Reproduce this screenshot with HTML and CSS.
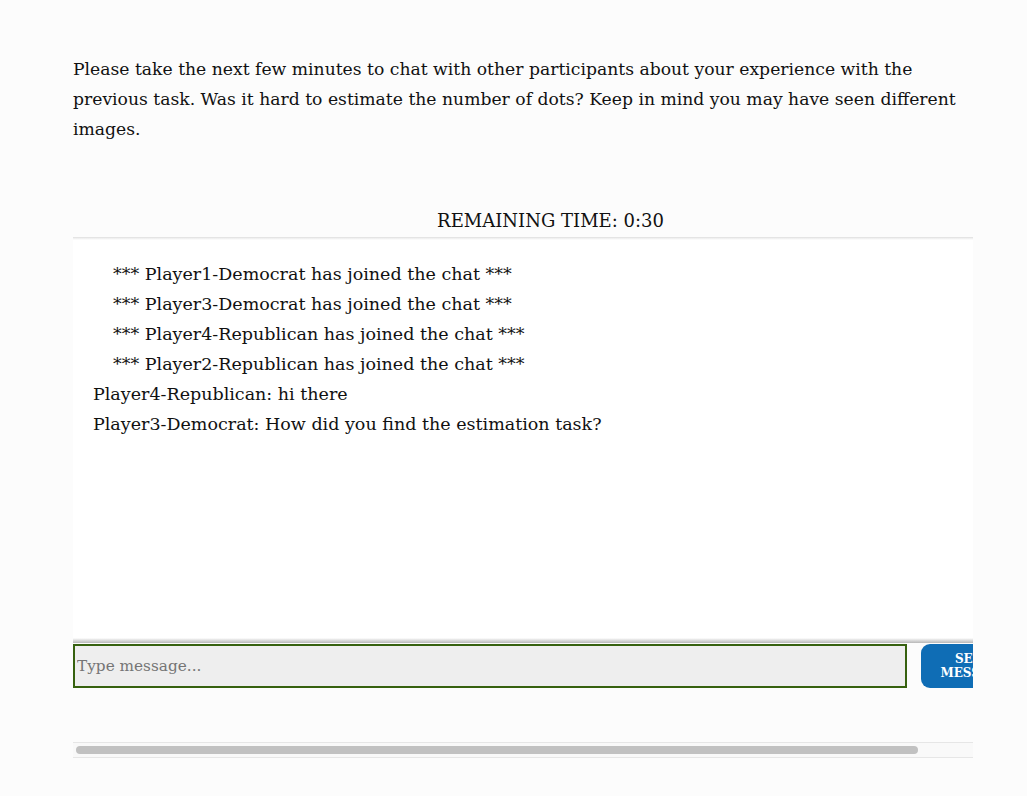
FILE: index.html
```html
<!DOCTYPE html>
<html lang="en">
<head>
<meta charset="utf-8">
<title>Chat</title>
<link rel="stylesheet" href="styles.css">
</head>
<body>
<div class="page">
  <p class="intro">Please take the next few minutes to chat with other participants about your experience with the previous task. Was it hard to estimate the number of dots? Keep in mind you may have seen different images.</p>
  <div class="chat-frame">
    <div class="chat-scroll">
      <div class="chat-inner">
        <div class="timer">REMAINING TIME: 0:30</div>
        <div class="log">
          <div class="msg sys">*** Player1-Democrat has joined the chat ***</div>
          <div class="msg sys">*** Player3-Democrat has joined the chat ***</div>
          <div class="msg sys">*** Player4-Republican has joined the chat ***</div>
          <div class="msg sys">*** Player2-Republican has joined the chat ***</div>
          <div class="msg">Player4-Republican: hi there</div>
          <div class="msg">Player3-Democrat: How did you find the estimation task?</div>
        </div>
        <div class="composer">
          <input class="input" type="text" placeholder="Type message...">
          <button class="send" type="button">Send<br>Message</button>
        </div>
      </div>
    </div>
    <div class="hscroll"><div class="hthumb"></div></div>
  </div>
</div>
</body>
</html>
```
FILE: styles.css
```css
html, body {
  margin: 0;
  padding: 0;
  background: #fcfcfc;
}
body {
  font-family: "DejaVu Serif", "Liberation Serif", serif;
  font-size: 17.5px;
  color: #111;
}
.page {
  width: 900px;
  padding: 54px 0 0 73px;
}
.intro {
  margin: 0;
  line-height: 30px;
  font-size: 17.2px;
}
.chat-frame {
  margin-top: 62px;
  width: 900px;
}
.chat-scroll {
  width: 900px;
  overflow: hidden;
}
.chat-inner {
  width: 955px;
}
.timer {
  text-align: center;
  line-height: 30px;
  height: 31px;
  font-size: 18px;
}
.log {
  height: 384px;
  padding-top: 22px;
  background:
    linear-gradient(to bottom, #dcdcdc 0, #ececec 1px, #ffffff 3px, #ffffff calc(100% - 5px), #e0e0e0 calc(100% - 3px), #b8b8b8 100%);
}
.msg {
  line-height: 30px;
  padding-left: 20px;
}
.msg.sys {
  padding-left: 40px;
}
.composer {
  display: flex;
  gap: 14px;
  margin-top: 1px;
  padding-bottom: 54px;
}
.input {
  box-sizing: border-box;
  width: 834px;
  height: 44px;
  border: 2px solid #36610f;
  background: #eeeeee;
  font-family: inherit;
  font-size: 15.3px;
  padding: 0 2px;
  color: #111;
  outline: none;
}
.input::placeholder {
  color: #757575;
}
.send {
  box-sizing: border-box;
  flex: none;
  width: 107px;
  height: 44px;
  border: none;
  border-radius: 9px;
  background: #0f6db5;
  color: #fff;
  font-family: inherit;
  font-weight: bold;
  font-size: 12px;
  line-height: 14px;
  text-transform: uppercase;
  padding: 0;
}
.hscroll {
  box-sizing: border-box;
  height: 16px;
  background: #f9f9f9;
  border-top: 1px solid #e6e6e6;
  border-bottom: 1px solid #e6e6e6;
  padding: 3px 3px;
}
.hthumb {
  width: 842px;
  height: 8px;
  background: #c1c1c1;
  border-radius: 4px;
}
```
